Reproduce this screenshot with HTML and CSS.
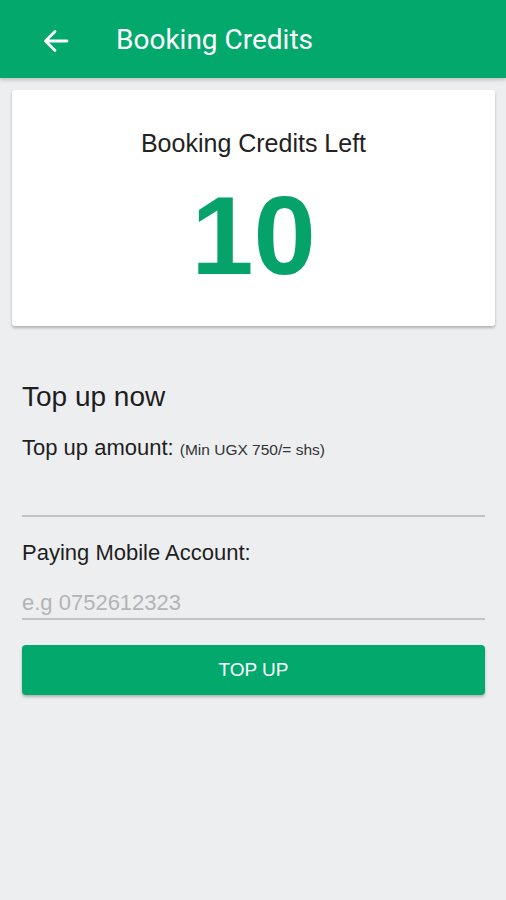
FILE: index.html
```html
<!DOCTYPE html>
<html lang="en">

<head>
    <meta charset="UTF-8">
    <meta name="viewport" content="width=device-width, initial-scale=1.0">
    <title>Booking Credits</title>
    <link rel="stylesheet" href="styles.css">
</head>

<body>
    <header class="toolbar">
        <button class="back-btn" aria-label="Back">
            <svg viewBox="0 0 26 24" width="26" height="24">
                <path d="M24 12H3M12 2.5L2.5 12l9.5 9.5" fill="none" stroke="#fff" stroke-width="2.8" stroke-linecap="round" stroke-linejoin="round"/>
            </svg>
        </button>
        <h1>Booking Credits</h1>
    </header>

    <div class="credits-card">
        <p class="credits-title">Booking Credits Left</p>
        <p class="credits-count">10</p>
    </div>

    <section class="topup">
        <h2>Top up now</h2>
        <label for="amount">Top up amount: <small>(Min UGX 750/= shs)</small></label>
        <input type="number" id="amount">
        <label for="phone">Paying Mobile Account:</label>
        <input type="tel" id="phone" placeholder="e.g 0752612323">
        <button class="topup-btn">TOP UP</button>
    </section>
</body>

</html>
```

FILE: styles.css
```css
* {
    margin: 0;
    padding: 0;
    box-sizing: border-box;
    font-family: "Liberation Sans", Arial, sans-serif;
}

body {
    background: #edeef0;
    color: #1e1e1e;
    min-height: 100vh;
}

.toolbar {
    height: 78px;
    background: #02a86c;
    display: flex;
    align-items: center;
    padding-left: 43px;
    box-shadow: 0 2px 4px rgba(0, 0, 0, 0.2);
}

.back-btn {
    width: 26px;
    height: 24px;
    border: none;
    background: none;
    display: flex;
    margin-top: 3px;
}

.toolbar h1 {
    font-family: Roboto, sans-serif;
    font-weight: normal;
    font-size: 28px;
    color: #fff;
    margin-left: 47px;
    margin-top: 1px;
}

.credits-card {
    margin: 12px 11px 0 12px;
    height: 236px;
    background: #fff;
    border-radius: 3px;
    box-shadow: 0 2px 3px rgba(0, 0, 0, 0.25);
    text-align: center;
    padding-top: 38px;
}

.credits-title {
    font-size: 25px;
    line-height: 30px;
    color: #222;
}

.credits-count {
    margin-top: 22px;
    font-size: 112px;
    line-height: 112px;
    font-weight: bold;
    color: #05a36a;
}

.topup {
    padding: 56px 21px 0 22px;
    display: flex;
    flex-direction: column;
}

.topup h2 {
    font-weight: normal;
    font-size: 28px;
    line-height: 30px;
    color: #1e1e1e;
}

.topup label {
    font-size: 22px;
    line-height: 26px;
    margin-top: 23px;
    color: #1e1e1e;
}

.topup label small {
    font-size: 15.5px;
    color: #333;
}

.topup input {
    height: 44px;
    padding: 12px 0 0;
    margin-top: 10px;
    border: none;
    border-bottom: 2px solid #c3c4c6;
    background: transparent;
    outline: none;
    font-size: 22px;
    color: #1e1e1e;
}

.topup input::placeholder {
    color: #b3b4b6;
}

.topup-btn {
    margin-top: 25px;
    height: 50px;
    border: none;
    border-radius: 4px;
    background: #02a86c;
    color: #fff;
    font-size: 19px;
    box-shadow: 0 2px 3px rgba(0, 0, 0, 0.25);
}
```
